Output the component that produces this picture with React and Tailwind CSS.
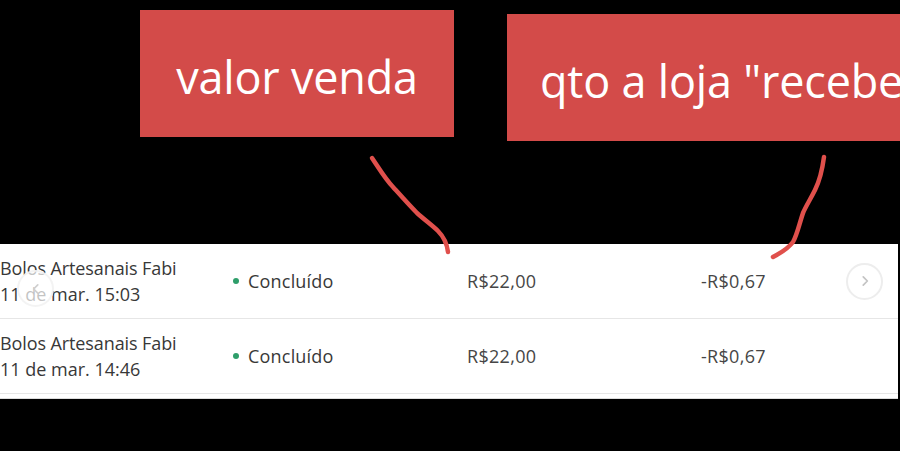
import React from "react";

const rows = [
  { store: "Bolos Artesanais Fabi", date: "11 de mar. 15:03", status: "Concluído", total: "R$22,00", fee: "-R$0,67", nav: true },
  { store: "Bolos Artesanais Fabi", date: "11 de mar. 14:46", status: "Concluído", total: "R$22,00", fee: "-R$0,67", nav: false },
];

function OrderRow({ row }) {
  return (
    <div className="relative flex h-[75px] items-center border-b border-[#e6e6e6] text-[18px] text-[#383838]">
      <div className="flex w-[222px] flex-col leading-[26px]">
        <span className="tracking-[-0.1px]">{row.store}</span>
        <span>{row.date}</span>
      </div>
      <div className="flex w-[245px] items-center gap-[9px] pl-[11px]">
        <span className="h-[6px] w-[6px] rounded-full bg-[#2e9e6a]" />
        <span className="tracking-[0.2px]">{row.status}</span>
      </div>
      <div className="w-[234px] tracking-[0.3px] text-[#464646]">{row.total}</div>
      <div className="flex-1 tracking-[0.3px] text-[#464646]">{row.fee}</div>
      {row.nav && (
        <div className="mr-[15px] flex h-[37px] w-[37px] items-center justify-center rounded-full border-2 border-[#ededed]">
          <svg width="14" height="14" viewBox="0 0 24 24" fill="none" stroke="#c4c4c4" strokeWidth="3" strokeLinecap="round" strokeLinejoin="round">
            <path d="M9 5l7 7-7 7" />
          </svg>
        </div>
      )}
    </div>
  );
}

export default function App() {
  return (
    <div className="relative h-[451px] w-[900px] overflow-hidden bg-black" style={{ fontFamily: '"Open Sans", "Liberation Sans", sans-serif' }}>
      {/* callout boxes */}
      <div className="flex h-[244px] items-start pl-[140px]">
        <div className="mt-[10px] flex h-[127px] w-[314px] items-center justify-center bg-[#d34b49] pt-[6px] text-[45px] tracking-[-0.2px] text-white">
          valor venda
        </div>
        <div className="ml-[53px] mt-[14px] flex h-[127px] min-w-0 flex-1 items-center overflow-hidden whitespace-nowrap bg-[#d34b49] pl-[33px] pt-[6px] text-[45px] tracking-[-0.2px] text-white">
          qto a loja "recebe
        </div>
      </div>

      {/* orders table */}
      <div className="mr-[2px] bg-white">
        {rows.map((r, i) => (
          <OrderRow key={i} row={r} />
        ))}
        <div className="h-[5px] border-b border-[#dcdcdc]" />
      </div>

      {/* faint back button over first row */}
      <div className="absolute left-[17px] top-[270px] flex h-[37px] w-[37px] items-center justify-center rounded-full border-2 border-[#f0f0f0]/80 bg-white/70">
        <svg width="14" height="14" viewBox="0 0 24 24" fill="none" stroke="#cfcfcf" strokeWidth="3" strokeLinecap="round" strokeLinejoin="round">
          <path d="M15 5l-7 7 7 7" />
        </svg>
      </div>

      {/* hand-drawn pointer strokes */}
      <svg className="pointer-events-none absolute left-0 top-0" width="900" height="451" fill="none" stroke="#e0504c" strokeWidth="4.5" strokeLinecap="round" strokeLinejoin="round">
        <path d="M372 158 C380 170 386 180 393 187 C402 197 410 206 417 213 C426 221 433 226 438 231 C444 237 447 244 448 252" />
        <path d="M824 157 C822 172 819 182 815 190 C810 200 806 206 803 213 C799 225 797 235 793 242 C787 250 780 253 773 257" />
      </svg>
    </div>
  );
}
